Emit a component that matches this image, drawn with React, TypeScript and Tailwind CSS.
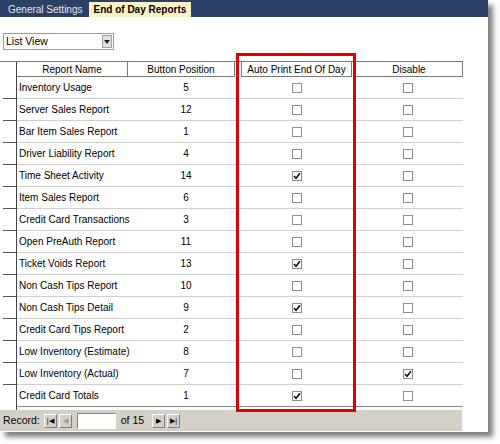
import React from 'react';

type Row = { name: string; pos: number; auto: boolean; disable: boolean };

const rows: Row[] = [
  { name: 'Inventory Usage', pos: 5, auto: false, disable: false },
  { name: 'Server Sales Report', pos: 12, auto: false, disable: false },
  { name: 'Bar Item Sales Report', pos: 1, auto: false, disable: false },
  { name: 'Driver Liability Report', pos: 4, auto: false, disable: false },
  { name: 'Time Sheet Activity', pos: 14, auto: true, disable: false },
  { name: 'Item Sales Report', pos: 6, auto: false, disable: false },
  { name: 'Credit Card Transactions', pos: 3, auto: false, disable: false },
  { name: 'Open PreAuth Report', pos: 11, auto: false, disable: false },
  { name: 'Ticket Voids Report', pos: 13, auto: true, disable: false },
  { name: 'Non Cash Tips Report', pos: 10, auto: false, disable: false },
  { name: 'Non Cash Tips Detail', pos: 9, auto: true, disable: false },
  { name: 'Credit Card Tips Report', pos: 2, auto: false, disable: false },
  { name: 'Low Inventory (Estimate)', pos: 8, auto: false, disable: false },
  { name: 'Low Inventory (Actual)', pos: 7, auto: false, disable: true },
  { name: 'Credit Card Totals', pos: 1, auto: true, disable: false },
];

const Check = ({ on }: { on: boolean }) => (
  <span className="w-[10px] h-[10px] border border-[#8c8c8c] bg-white flex items-center justify-center">
    {on && (
      <svg width="8" height="8" viewBox="0 0 8 8">
        <path d="M1 4 L3 6.2 L7 1.2" fill="none" stroke="#111" strokeWidth="1.6" />
      </svg>
    )}
  </span>
);

const NavBtn = ({ children, dim }: { children: React.ReactNode; dim?: boolean }) => (
  <span
    className={`w-[13px] h-[14px] bg-[#d4d0c8] border border-t-white border-l-white border-r-[#808080] border-b-[#808080] flex items-center justify-center text-[7px] leading-none ${dim ? 'text-[#9a9a9a]' : 'text-black'}`}
  >
    {children}
  </span>
);

export default function App() {
  return (
    <div className="w-[500px] h-[444px] bg-white relative font-['Liberation_Sans',Arial,sans-serif] text-[10px] text-black">
      <div className="w-[488px] h-[432px] bg-white flex flex-col shadow-[5px_5px_5px_rgba(0,0,0,0.5)] relative">
        {/* tab strip */}
        <div className="h-[17px] bg-[#2c3f64] flex items-end shrink-0">
          <div className="pl-[8px] pr-[6px] h-[15px] flex items-center text-[#e4e8ee] text-[10px]">General Settings</div>
          <div className="h-[15px] px-[5px] bg-[#fdf1c6] flex items-center font-bold text-[10px]">End of Day Reports</div>
        </div>

        {/* view selector */}
        <div className="ml-[3px] mt-[16px] w-[111px] h-[17px] border border-[#9a9a9a] bg-white flex items-center shrink-0">
          <span className="flex-1 pl-[2px] text-[10.5px]">List View</span>
          <span className="w-[10px] h-[13px] mr-[1px] bg-[#e4e2dc] border border-[#a0a0a0] flex items-center justify-center">
            <svg width="6" height="4" viewBox="0 0 6 4">
              <path d="M0 0 H6 L3 4 Z" fill="#222" />
            </svg>
          </span>
        </div>

        {/* header */}
        <div className="mt-[11px] flex h-[16px] shrink-0 w-[463px] border-t border-[#7a7a7a]">
          <div className="w-[17px] border-r border-[#444]" />
          <div className="w-[111px] border-r border-b border-[#7a7a7a] flex items-center justify-center">Report Name</div>
          <div className="w-[107px] border-r border-b border-[#7a7a7a] flex items-center justify-center">Button Position</div>
          <div className="w-[6px]" />
          <div className="w-[111px] border-x border-b border-[#7a7a7a] flex items-center justify-center">Auto Print End Of Day</div>
          <div className="w-[3px]" />
          <div className="w-[108px] border-x border-b border-[#7a7a7a] flex items-center justify-center">Disable</div>
        </div>

        {/* rows */}
        <div className="flex flex-col w-[463px] shrink-0">
          {rows.map((r, i) => (
            <div key={r.name} className="flex h-[22px]">
              <div className="w-[17px] border-r border-[#444] flex flex-col justify-end">
                <div className={`ml-[3px] h-px ${i === rows.length - 1 ? 'bg-transparent' : 'bg-[#555]'}`} />
              </div>
              <div
                className={`flex-1 flex items-center border-b ${i === rows.length - 1 ? 'border-[#8a8a8a]' : 'border-[#cfcfcf]'}`}
              >
                <div className="w-[111px] pl-[2px] whitespace-nowrap">{r.name}</div>
                <div className="w-[113px] pl-[3px] text-center">{r.pos}</div>
                <div className="w-[111px] flex justify-center">
                  <Check on={r.auto} />
                </div>
                <div className="w-[3px]" />
                <div className="w-[108px] flex justify-center pr-[3px]">
                  <Check on={r.disable} />
                </div>
              </div>
            </div>
          ))}
          <div className="h-[3px] w-[17px] border-r border-[#444]" />
        </div>

        {/* record navigator */}
        <div className="w-[462px] h-[21px] bg-[#d4d0c8] flex items-center pl-[3px] shrink-0 text-[10.5px]">
          <span className="mr-[4px]">Record:</span>
          <div className="flex gap-[2px]">
            <NavBtn>|◀</NavBtn>
            <NavBtn dim>◀</NavBtn>
          </div>
          <span className="ml-[5px] w-[39px] h-[16px] bg-white border border-t-[#808080] border-l-[#808080] border-r-white border-b-white" />
          <span className="ml-[5px] mr-[8px]">of 15</span>
          <div className="flex gap-[2px]">
            <NavBtn>▶</NavBtn>
            <NavBtn>▶|</NavBtn>
          </div>
        </div>

        {/* highlight */}
        <div className="absolute left-[236px] top-[53px] w-[120px] h-[359px] border-[3px] border-[#e00000] pointer-events-none" />
      </div>
    </div>
  );
}
